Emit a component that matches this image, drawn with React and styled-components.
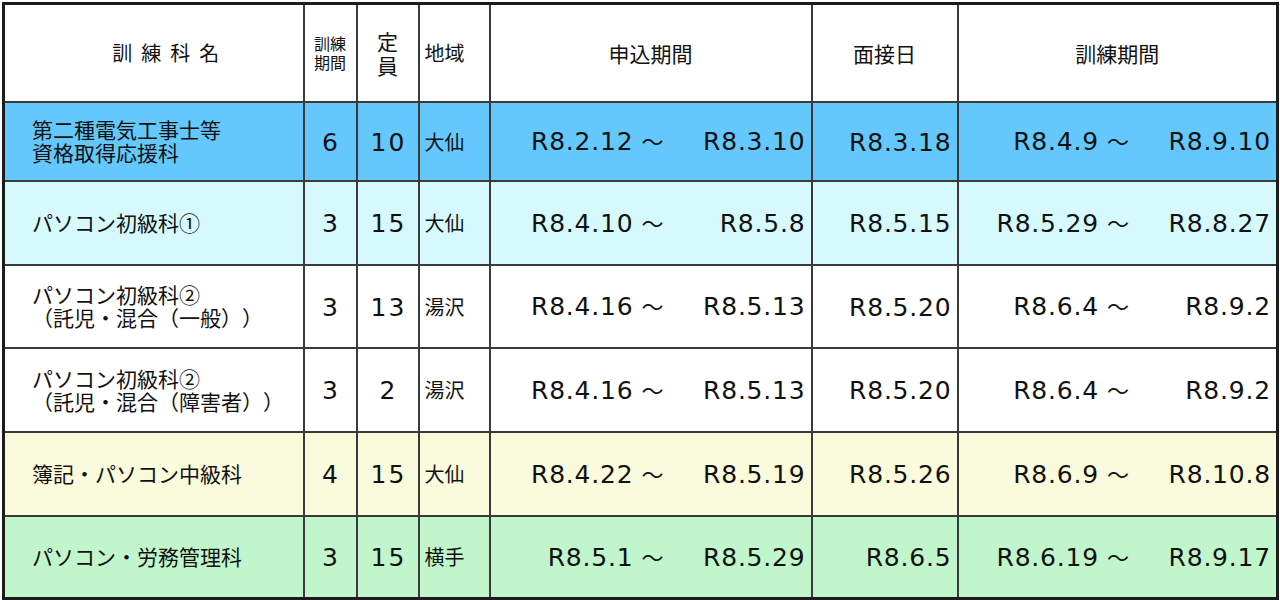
import styled, { createGlobalStyle } from "styled-components";

const GlobalStyle = createGlobalStyle`
  html, body {
    margin: 0;
    padding: 0;
    background: #ffffff;
  }
  body {
    font-family: "Noto Sans CJK JP", "DejaVu Sans", sans-serif;
    color: #111;
    text-spacing-trim: space-all;
  }
`

const Page = styled.div`
  padding: 2px 1px 0 2px;
`

const Table = styled.table`
  width: 1277px;
  border-collapse: collapse;
  table-layout: fixed;
  border: 3px solid #1c1c1c;
`

const Row = styled.tr`
  height: ${(p) => p.h}px;
  background: ${(p) => p.bg || "#ffffff"};
`

const Cell = styled.td`
  border: 2px solid #3a3a3a;
  padding: 0;
  vertical-align: middle;
`

const HeadCell = styled(Cell)`
  font-family: "Noto Sans CJK JP", sans-serif;
  font-size: ${(p) => p.size || 20}px;
  line-height: ${(p) => p.lh || 24}px;
  text-align: ${(p) => p.align || "center"};
  padding-left: ${(p) => p.pl || 0}px;
  letter-spacing: ${(p) => p.ls || 0}px;
`

const NameCell = styled(Cell)`
  font-family: "Noto Sans CJK JP", sans-serif;
  font-size: 21px;
  line-height: 23px;
  padding-left: 27px;
  white-space: nowrap;
  text-spacing-trim: space-all;
`

const NumCell = styled(Cell)`
  font-family: "DejaVu Sans", sans-serif;
  font-size: 25px;
  letter-spacing: 2px;
  text-indent: 2px;
  text-align: center;
  padding-top: 2px;
`

const AreaCell = styled(Cell)`
  font-family: "Noto Sans CJK JP", sans-serif;
  font-size: 20px;
  padding-left: 5px;
`

const DateCell = styled(Cell)`
  font-family: "DejaVu Sans", sans-serif;
  font-size: 25px;
  letter-spacing: 0.8px;
  text-align: right;
  padding-right: 5px;
  white-space: nowrap;
  padding-top: 2px;
`

const Range = styled.div`
  display: grid;
  grid-template-columns: 1fr 142px;
  align-items: baseline;
  padding-right: 5px;
  padding-top: 2px;
  font-family: "DejaVu Sans", sans-serif;
  font-size: 25px;
  line-height: 30px;
  letter-spacing: 0.8px;
  white-space: nowrap;

  span {
    text-align: right;
  }
`

const Tilde = styled.span`
  font-family: "Noto Sans CJK JP", sans-serif;
  font-size: 22px;
  line-height: 1;
  margin-left: 8px;
  letter-spacing: 0;
`

const courses = [
  { name: ["第二種電気工事士等", "資格取得応援科"], months: 6, cap: 10, area: "大仙", apply: ["R8.2.12", "R8.3.10"], interview: "R8.3.18", term: ["R8.4.9", "R8.9.10"], bg: "#64c8fc", h: 79 },
  { name: ["パソコン初級科①"], months: 3, cap: 15, area: "大仙", apply: ["R8.4.10", "R8.5.8"], interview: "R8.5.15", term: ["R8.5.29", "R8.8.27"], bg: "#d6f9fd", h: 84 },
  { name: ["パソコン初級科②", "（託児・混合（一般））"], months: 3, cap: 13, area: "湯沢", apply: ["R8.4.16", "R8.5.13"], interview: "R8.5.20", term: ["R8.6.4", "R8.9.2"], bg: "#ffffff", h: 83 },
  { name: ["パソコン初級科②", "（託児・混合（障害者））"], months: 3, cap: 2, area: "湯沢", apply: ["R8.4.16", "R8.5.13"], interview: "R8.5.20", term: ["R8.6.4", "R8.9.2"], bg: "#ffffff", h: 84 },
  { name: ["簿記・パソコン中級科"], months: 4, cap: 15, area: "大仙", apply: ["R8.4.22", "R8.5.19"], interview: "R8.5.26", term: ["R8.6.9", "R8.10.8"], bg: "#fafadc", h: 84 },
  { name: ["パソコン・労務管理科"], months: 3, cap: 15, area: "横手", apply: ["R8.5.1", "R8.5.29"], interview: "R8.6.5", term: ["R8.6.19", "R8.9.17"], bg: "#c1f5cc", h: 83 },
]

function DateRange({ from, to }) {
  return (
    <Range>
      <span>{from}<Tilde>～</Tilde></span>
      <span>{to}</span>
    </Range>
  )
}

function App() {
  return (
    <Page>
      <GlobalStyle />
      <Table>
        <colgroup>
          <col style={{ width: 300 }} />
          <col style={{ width: 53 }} />
          <col style={{ width: 62 }} />
          <col style={{ width: 71 }} />
          <col style={{ width: 322 }} />
          <col style={{ width: 146 }} />
          <col />
        </colgroup>
        <thead>
          <Row h={98}>
            <HeadCell size={20} ls={9} pl={33}>訓練科名</HeadCell>
            <HeadCell size={16} lh={19}>訓練<br />期間</HeadCell>
            <HeadCell size={21} lh={24}>定<br />員</HeadCell>
            <HeadCell align="left" pl={5}>地域</HeadCell>
            <HeadCell size={21}>申込期間</HeadCell>
            <HeadCell size={21}>面接日</HeadCell>
            <HeadCell size={21}>訓練期間</HeadCell>
          </Row>
        </thead>
        <tbody>
          {courses.map((c, i) => (
            <Row key={i} h={c.h} bg={c.bg}>
              <NameCell>
                {c.name.map((line, j) => (
                  <div key={j}>{line}</div>
                ))}
              </NameCell>
              <NumCell>{c.months}</NumCell>
              <NumCell>{c.cap}</NumCell>
              <AreaCell>{c.area}</AreaCell>
              <Cell>
                <DateRange from={c.apply[0]} to={c.apply[1]} />
              </Cell>
              <DateCell>{c.interview}</DateCell>
              <Cell>
                <DateRange from={c.term[0]} to={c.term[1]} />
              </Cell>
            </Row>
          ))}
        </tbody>
      </Table>
    </Page>
  )
}

export default App
